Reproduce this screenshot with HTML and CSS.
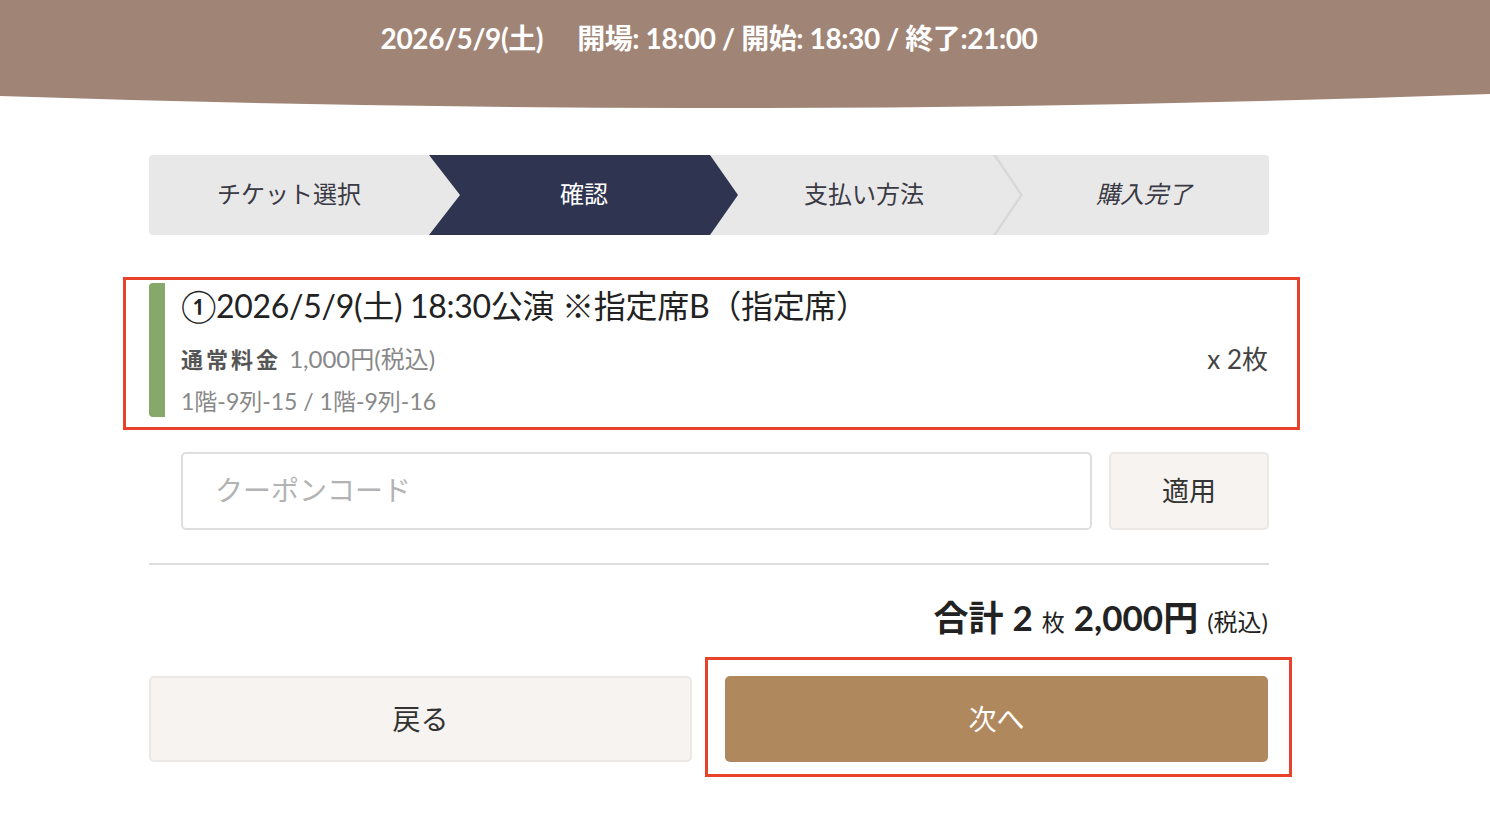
FILE: index.html
```html
<!DOCTYPE html>
<html lang="ja">
<head>
<meta charset="utf-8">
<title>確認</title>
<link rel="stylesheet" href="styles.css">
</head>
<body>
<header class="hero">
  <div class="hero-text"><span class="hero-date">2026/5/9(土)</span><span>開場: 18:00 / 開始: 18:30 / 終了:21:00</span></div>
</header>
<svg class="hero-wave" viewBox="0 0 1490 14" preserveAspectRatio="none"><path d="M0 0 H1490 V0 Q745 27 0 2 Z" fill="#a08577"/></svg>

<main class="wrap">
  <ol class="steps">
    <li class="step first">チケット選択</li>
    <li class="step active">確認</li>
    <li class="step">支払い方法</li>
    <li class="step last">購入完了</li>
  </ol>

  <section class="mark ticket-mark">
    <div class="ticket">
      <div class="ticket-bar"></div>
      <div class="ticket-body">
        <h2 class="ticket-title">①2026/5/9(土) 18:30公演 ※指定席B（指定席）</h2>
        <div class="ticket-row">
          <div class="ticket-price"><b>通常料金</b> 1,000円(税込)</div>
          <div class="ticket-qty">x 2枚</div>
        </div>
        <div class="ticket-seats">1階-9列-15 / 1階-9列-16</div>
      </div>
    </div>
  </section>

  <div class="coupon">
    <input class="coupon-input" type="text" placeholder="クーポンコード">
    <button class="coupon-btn" type="button">適用</button>
  </div>

  <hr class="divider">

  <div class="total"><b class="t-big">合計</b><b class="t-big t-gap">2</b><span class="t-small t-gap">枚</span><b class="t-big t-gap">2,000円</b><span class="t-paren t-gap">(税込)</span></div>

  <div class="actions">
    <button class="btn btn-back" type="button">戻る</button>
    <div class="mark next-mark">
      <button class="btn btn-next" type="button">次へ</button>
    </div>
  </div>
</main>
</body>
</html>
```

FILE: styles.css
```css
* { box-sizing: border-box; }
html, body { margin: 0; padding: 0; }
body {
  width: 1490px;
  background: #fff;
  font-family: Lato, "Noto Sans CJK JP", sans-serif;
  color: #333;
}

.hero {
  height: 94px;
  background: #a08577;
  display: flex;
  justify-content: center;
  padding-top: 19px;
}
.hero-text {
  color: #fff;
  font-weight: 700;
  font-size: 28px;
  line-height: 38px;
  letter-spacing: -0.4px;
  padding-right: 72px;
}
.hero-date { margin-right: 34px; }
.hero-wave { display: block; width: 1490px; height: 14px; }

.wrap {
  width: 1120px;
  margin: 47px 0 0 149px;
}

/* stepper */
.steps {
  list-style: none;
  margin: 0;
  padding: 0;
  display: flex;
  height: 80px;
  background: #e9e8e9;
  border-radius: 4px;
}
.step {
  position: relative;
  width: 280px;
  flex: none;
  display: flex;
  align-items: center;
  justify-content: center;
  padding-left: 30px;
  padding-bottom: 6px;
  font-size: 24px;
  color: #3a3a44;
  font-family: "Noto Sans CJK JP", sans-serif;
  font-weight: 400;
}
.step.first { padding-left: 0; }
.step.last { font-style: italic; }
.step.active {
  color: #fff;
  background: #2f3450;
  clip-path: polygon(0 0, 100% 0, 100% 100%, 0 100%, 31px 50%);
}
.steps .step:nth-child(3)::before {
  content: "";
  position: absolute;
  left: 0;
  top: 0;
  width: 30px;
  height: 80px;
  background: #2f3450;
  clip-path: polygon(0 0, 1px 0, 29px 50%, 1px 100%, 0 100%);
  filter: drop-shadow(2px 0 0 #d6d5d6);
}
.step.last::before {
  content: "";
  position: absolute;
  left: 4px;
  top: 0;
  width: 32px;
  height: 80px;
  background: #d9d8d9;
  clip-path: polygon(0 0, 3px 0, 30px 50%, 3px 100%, 0 100%, 27px 50%);
}

/* annotation marks */
.mark { border: 3px solid #e8432a; }
.ticket-mark {
  margin: 42px -31px 0 -26px;
  padding: 3px 28px 6px 23px;
}

/* ticket */
.ticket { display: flex; }
.ticket-bar {
  width: 16px;
  height: 134px;
  flex: none;
  background: #86a86b;
  border-radius: 4px 0 0 4px;
}
.ticket-body {
  flex: 1;
  padding-left: 16px;
  padding-top: 2px;
}
.ticket-title {
  margin: 0;
  font-size: 32px;
  line-height: 42px;
  font-weight: 400;
  color: #222;
  letter-spacing: -0.3px;
}
.ticket-row {
  display: flex;
  justify-content: space-between;
  align-items: center;
  margin-top: 10px;
  height: 40px;
}
.ticket-price {
  font-size: 24px;
  color: #888;
}
.ticket-price b {
  color: #555;
  font-weight: 700;
  font-size: 22px;
  letter-spacing: 3px;
  margin-right: 2px;
  font-family: "Noto Sans CJK JP", sans-serif;
}
.ticket-qty {
  font-size: 26px;
  color: #444;
  padding-right: 1px;
}
.ticket-seats {
  margin-top: 4px;
  font-size: 23px;
  line-height: 40px;
  color: #888;
}

/* coupon */
.coupon {
  display: flex;
  gap: 17px;
  margin-top: 22px;
  padding-left: 32px;
  height: 78px;
}
.coupon-input {
  flex: 1;
  height: 78px;
  border: 2px solid #dedede;
  border-radius: 5px;
  padding: 0 32px;
  padding-bottom: 4px;
  font-size: 28px;
  font-family: "Noto Sans CJK JP", sans-serif;
  color: #333;
  outline: none;
  background: #fff;
}
.coupon-input::placeholder { color: #b3b3b3; }
.coupon-btn {
  width: 160px;
  flex: none;
  height: 78px;
  border: 2px solid #ebe8e6;
  border-radius: 5px;
  background: #f7f3f0;
  font-size: 27px;
  font-family: "Noto Sans CJK JP", sans-serif;
  color: #333;
  padding-bottom: 4px;
}

.divider {
  margin: 33px 0 0;
  border: 0;
  border-top: 2px solid #dedede;
}

.total {
  margin-top: 31px;
  display: flex;
  justify-content: flex-end;
  align-items: baseline;
  line-height: 42px;
  color: #222;
  padding-right: 1px;
}
.t-big { font-size: 35px; font-weight: 700; }
.t-small { font-size: 23px; }
.t-paren { font-size: 24px; }
.t-gap { margin-left: 9px; }

.actions {
  display: flex;
  margin-top: 14px;
  margin-right: -23px;
  align-items: flex-start;
}
.btn {
  height: 86px;
  border-radius: 5px;
  font-size: 28px;
  font-family: "Noto Sans CJK JP", sans-serif;
  padding-bottom: 4px;
}
.btn-back {
  width: 543px;
  flex: none;
  margin-top: 19px;
  margin-right: 13px;
  background: #f7f3f0;
  border: 2px solid #ebe8e6;
  color: #333;
}
.next-mark {
  flex: 1;
  padding: 16px 21px 12px 17px;
}
.btn-next {
  width: 100%;
  display: block;
  background: #b0885e;
  border: 0;
  color: #fff;
}
```
